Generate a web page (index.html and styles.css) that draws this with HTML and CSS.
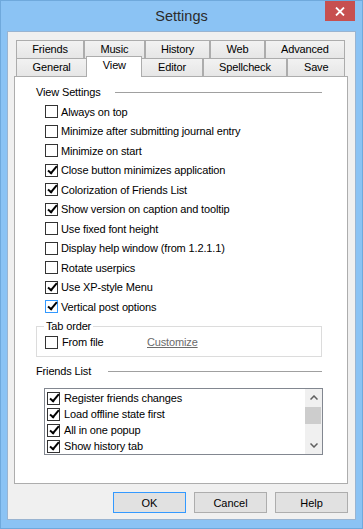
FILE: index.html
```html
<!DOCTYPE html>
<html lang="en">
<head>
  <meta charset="UTF-8">
  <meta name="viewport" content="width=device-width, initial-scale=1.0">
  <title>Settings</title>
  <link rel="stylesheet" href="styles.css">
</head>
<body>

  <div class="window">
    <!-- Title bar -->
    <div class="titlebar">
      <span></span>
      <div class="title">Settings</div>
      <div class="close-btn">
        <svg width="10" height="9" viewBox="0 0 10 9">
          <path d="M1 0.5 L9 8.5 M9 0.5 L1 8.5" stroke="#fff" stroke-width="1.8" fill="none"/>
        </svg>
      </div>
    </div>

    <div class="client">
      <!-- Tabs, selected row sits next to the panel -->
      <div class="tabs">
        <div class="tab-row">
          <div class="tab">Friends</div>
          <div class="tab">Music</div>
          <div class="tab">History</div>
          <div class="tab">Web</div>
          <div class="tab">Advanced</div>
        </div>
        <div class="tab-row">
          <div class="tab">General</div>
          <div class="tab active">View</div>
          <div class="tab">Editor</div>
          <div class="tab">Spellcheck</div>
          <div class="tab">Save</div>
        </div>
      </div>

      <div class="panel">
        <div class="section-head">
          <span>View Settings</span>
          <span class="rule"></span>
        </div>

        <div class="checklist">
          <div class="check-row"><span class="cb"></span>Always on top</div>
          <div class="check-row"><span class="cb"></span>Minimize after submitting journal entry</div>
          <div class="check-row"><span class="cb"></span>Minimize on start</div>
          <div class="check-row"><span class="cb on"></span>Close button minimizes application</div>
          <div class="check-row"><span class="cb on"></span>Colorization of Friends List</div>
          <div class="check-row"><span class="cb on"></span>Show version on caption and tooltip</div>
          <div class="check-row"><span class="cb"></span>Use fixed font height</div>
          <div class="check-row"><span class="cb"></span>Display help window (from 1.2.1.1)</div>
          <div class="check-row"><span class="cb"></span>Rotate userpics</div>
          <div class="check-row"><span class="cb on"></span>Use XP-style Menu</div>
          <div class="check-row"><span class="cb on hot"></span>Vertical post options</div>
        </div>

        <fieldset class="group">
          <legend>Tab order</legend>
          <div class="check-row">
            <span class="check-label"><span class="cb"></span>From file</span>
            <a class="link">Customize</a>
          </div>
        </fieldset>

        <div class="section-head friends-head">
          <span>Friends List</span>
          <span class="rule"></span>
        </div>

        <div class="listbox">
          <div class="list-items">
            <div class="list-row"><span class="cb on"></span>Register friends changes</div>
            <div class="list-row"><span class="cb on"></span>Load offline state first</div>
            <div class="list-row"><span class="cb on"></span>All in one popup</div>
            <div class="list-row"><span class="cb on"></span>Show history tab</div>
          </div>
          <div class="scrollbar">
            <div class="sb-btn">
              <svg width="8" height="5" viewBox="0 0 8 5"><polyline points="0.5,4.5 4,1 7.5,4.5" fill="none" stroke="#606060" stroke-width="1.5"/></svg>
            </div>
            <div class="sb-track"><div class="sb-thumb"></div></div>
            <div class="sb-btn">
              <svg width="8" height="5" viewBox="0 0 8 5"><polyline points="0.5,0.5 4,4 7.5,0.5" fill="none" stroke="#606060" stroke-width="1.5"/></svg>
            </div>
          </div>
        </div>
      </div>

      <!-- Dialog buttons -->
      <div class="buttons">
        <button class="btn default">OK</button>
        <button class="btn">Cancel</button>
        <button class="btn">Help</button>
      </div>
    </div>
  </div>

</body>
</html>
```

FILE: styles.css
```css
body {
  margin: 0;
  padding: 0;
  font-family: "Liberation Sans", Arial, sans-serif;
  font-size: 11px;
  letter-spacing: -0.15px;
  color: #000;
  background: #8bc3f4;
}
.window {
  box-sizing: border-box;
  width: 363px;
  height: 529px;
  background-color: #8bc3f4;
  border: 1px solid #6fa9dc;
  padding: 0 6px 8px;
  display: flex;
  flex-direction: column;
}
.titlebar {
  height: 30px;
  display: grid;
  grid-template-columns: 1fr auto 1fr;
  align-items: start;
}
.title {
  font-size: 14.5px;
  letter-spacing: 0;
  color: #2b2b2b;
  line-height: 30px;
}
.close-btn {
  justify-self: end;
  width: 30px;
  height: 20px;
  margin-right: 1px;
  background-color: #c75050;
  display: flex;
  align-items: center;
  justify-content: center;
}
.client {
  flex: 1;
  background-color: #f0f0f0;
  border: 1px solid #99b4d1;
  padding: 8px 7px 6px 6px;
  display: flex;
  flex-direction: column;
}

/* tabs */
.tabs {
  margin: 0 3px 0 2px;
}
.tab-row {
  display: flex;
  height: 18px;
}
.tab {
  flex: 1 1 auto;
  border: 1px solid #acacac;
  border-bottom: none;
  background: linear-gradient(#f2f2f2, #e6e6e6);
  text-align: center;
  line-height: 17px;
  white-space: nowrap;
}
.tab.active {
  align-self: flex-start;
  height: 20px;
  margin: -2px -1px -1px -1px;
  background: #fff;
  position: relative;
  z-index: 1;
}

/* panel */
.panel {
  flex: 1;
  background-color: #fff;
  border: 1px solid #adadad;
  padding: 8px 25px 0 21px;
}
.section-head {
  display: flex;
  align-items: center;
  gap: 14px;
  height: 14px;
}
.friends-head {
  gap: 17px;
  margin-top: 7px;
}
.rule {
  flex: 1;
  border-top: 1px solid #a0a0a0;
}
.checklist {
  margin-top: 3px;
}
.check-row {
  display: flex;
  align-items: center;
  height: 19.5px;
  padding-left: 9px;
  gap: 3px;
}
.cb {
  box-sizing: border-box;
  width: 13px;
  height: 13px;
  flex: none;
  border: 1px solid #333;
  background: #fff;
  display: flex;
  align-items: center;
  justify-content: center;
}
.cb.on::after {
  content: "";
  width: 3px;
  height: 8px;
  border: solid #000;
  border-width: 0 2.5px 2.5px 0;
  transform: rotate(40deg);
  margin: -3px 0 0 1px;
}
.cb.hot {
  border-color: #3399ff;
}

.group {
  margin: 3px 0 0;
  border: 1px solid #dcdcdc;
  padding: 0 0 4px 0;
}
.group legend {
  padding: 0 2px;
  margin-left: 7px;
  line-height: 13px;
}
.group .check-row {
  padding-left: 8px;
  gap: 0;
}
.check-label {
  display: flex;
  align-items: center;
  gap: 4px;
  width: 102px;
}
.link {
  color: #6b6b6b;
  text-decoration: underline;
}

/* list box */
.listbox {
  margin: 10px -1px 0 8px;
  height: 67px;
  box-sizing: border-box;
  border: 1px solid #828790;
  display: flex;
}
.list-items {
  flex: 1;
  padding: 1px 0 0 2px;
}
.list-row {
  display: flex;
  align-items: center;
  gap: 4px;
  height: 16px;
}
.scrollbar {
  width: 17px;
  background-color: #f0f0f0;
  display: flex;
  flex-direction: column;
}
.sb-btn {
  height: 17px;
  display: flex;
  align-items: center;
  justify-content: center;
}
.sb-track {
  flex: 1;
}
.sb-thumb {
  height: 17px;
  margin: 1px 1px 0 0;
  background-color: #cdcdcd;
}

/* buttons */
.buttons {
  display: flex;
  justify-content: flex-end;
  gap: 8px;
  margin-top: 8px;
}
.btn {
  box-sizing: border-box;
  width: 73px;
  height: 21px;
  padding: 0;
  font-family: "Liberation Sans", Arial, sans-serif;
  font-size: 11px;
  color: #000;
  background-color: #e1e1e1;
  border: 1px solid #adadad;
}
.btn.default {
  border-color: #3399ff;
}
```
